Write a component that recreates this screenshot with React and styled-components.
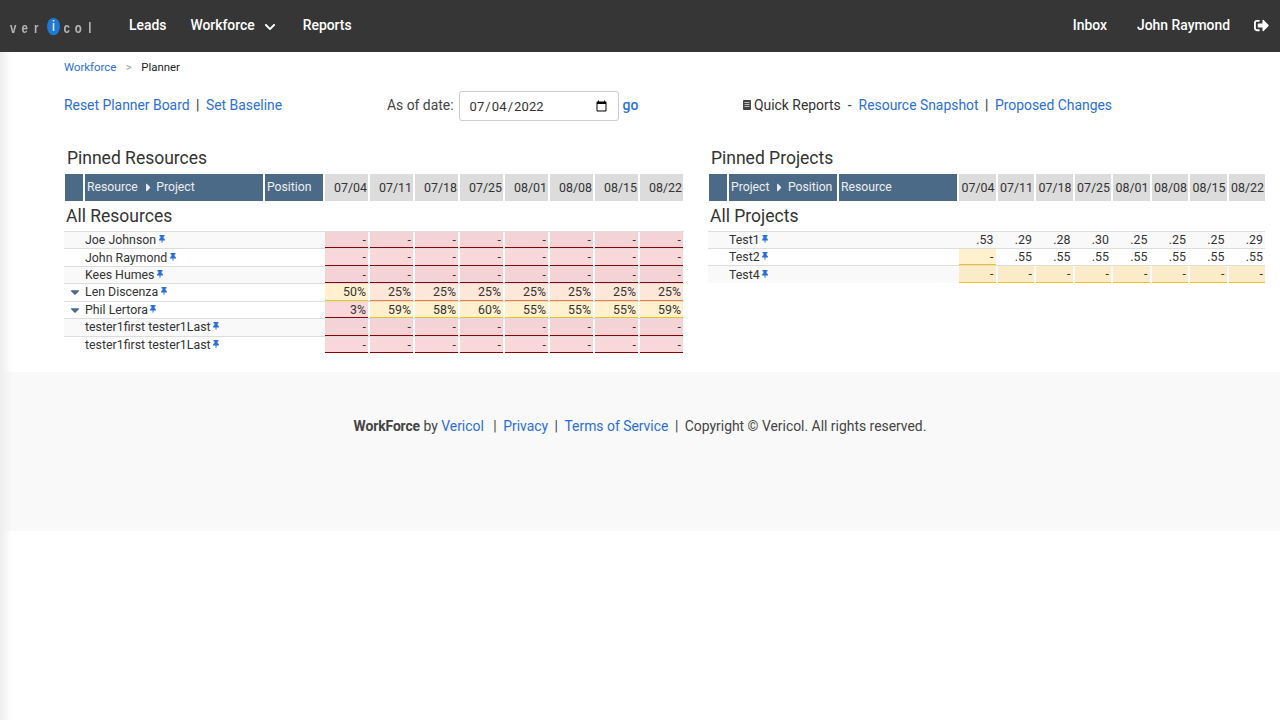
import React from 'react'
import styled, { createGlobalStyle } from 'styled-components'
import { FaSignOutAlt, FaChevronDown, FaThumbtack, FaCaretRight, FaCaretDown } from 'react-icons/fa'

const dates = ['07/04', '07/11', '07/18', '07/25', '08/01', '08/08', '08/15', '08/22']
const empty = ['-', '-', '-', '-', '-', '-', '-', '-']

const resources = [
    { name: 'Joe Johnson', cells: empty, tones: 'r', odd: true },
    { name: 'John Raymond', cells: empty, tones: 'r' },
    { name: 'Kees Humes', cells: empty, tones: 'r', odd: true },
    { name: 'Len Discenza', open: true, cells: ['50%', '25%', '25%', '25%', '25%', '25%', '25%', '25%'], tones: 'yooooooo' },
    { name: 'Phil Lertora', open: true, cells: ['3%', '59%', '58%', '60%', '55%', '55%', '55%', '59%'], tones: 'ryyyyyyy' },
    { name: 'tester1first tester1Last', cells: empty, tones: 'r', odd: true },
    { name: 'tester1first tester1Last', cells: empty, tones: 'r' },
]

const projects = [
    { name: 'Test1', cells: ['.53', '.29', '.28', '.30', '.25', '.25', '.25', '.29'], tones: 'n', odd: true },
    { name: 'Test2', cells: ['-', '.55', '.55', '.55', '.55', '.55', '.55', '.55'], tones: 'ynnnnnnn' },
    { name: 'Test4', cells: empty, tones: 'y', odd: true, height: 18 },
]

const tone = (tones, i) => (tones.length === 1 ? tones : tones[i])

const cellColors = {
    r: ['rgba(220, 60, 70, 0.2)', '#8b0000'],
    o: ['rgba(245, 120, 40, 0.18)', '#f57c2b'],
    y: ['rgba(255, 190, 30, 0.22)', '#f5bd20'],
    n: ['transparent', 'transparent'],
}

function Row({ row, nameWidth, height, cellWidth }) {
    return (
        <RowWrap $odd={row.odd} $height={row.height || height}>
            <NameCell $w={nameWidth}>
                <Toggle>{row.open && <FaCaretDown />}</Toggle>
                {row.name}
                <Pin><FaThumbtack /></Pin>
            </NameCell>
            <Cells>
                {row.cells.map((c, i) => (
                    <Cell key={i} $w={cellWidth} $tone={tone(row.tones, i)}>{c}</Cell>
                ))}
            </Cells>
        </RowWrap>
    )
}

export default function App() {
    return (
        <>
            <Global />
            <EdgeShade />
            <Nav>
                <Logo aria-label="vericol">
                    <span>v</span><span>e</span><span>r</span><Dot>i</Dot><span>c</span><span>o</span><span>l</span>
                </Logo>
                <NavLink>Leads</NavLink>
                <NavLink>Workforce<Chevron><FaChevronDown /></Chevron></NavLink>
                <NavLink>Reports</NavLink>
                <NavRight>
                    <NavLink>Inbox</NavLink>
                    <NavLink>John Raymond</NavLink>
                    <LogOut><FaSignOutAlt /></LogOut>
                </NavRight>
            </Nav>
            <Main>
                <Crumbs>
                    <a>Workforce</a><CrumbSep>&gt;</CrumbSep><span>Planner</span>
                </Crumbs>
                <Toolbar>
                    <ToolLeft><a>Reset Planner Board</a><Bar>|</Bar><a>Set Baseline</a></ToolLeft>
                    <ToolMid>
                        As of date:
                        <DateInput type="date" defaultValue="2022-07-04" />
                        <a>go</a>
                    </ToolMid>
                    <ToolRight>
                        <BookIcon viewBox="0 0 8 10">
                            <rect width="8" height="10" rx="1" fill="#444" />
                            <path d="M1.5 2.5h5M1.5 4.5h5M1.5 6.5h5" stroke="#ddd" strokeWidth="0.8" />
                        </BookIcon>
                        Quick Reports<Dash>-</Dash>
                        <a>Resource Snapshot</a><Bar>|</Bar><a>Proposed Changes</a>
                    </ToolRight>
                </Toolbar>
                <Boards>
                    <Board $w={620}>
                        <Title>Pinned Resources</Title>
                        <HeadRow>
                            <HeadBlue $w={18} />
                            <HeadBlue $w={178}>Resource<Arrow><FaCaretRight /></Arrow>Project</HeadBlue>
                            <HeadBlue $w={58}>Position</HeadBlue>
                            {dates.map(d => <HeadDate key={d} $w={43}>{d}</HeadDate>)}
                        </HeadRow>
                        <AllTitle>All Resources</AllTitle>
                        <Rows>
                            {resources.map((r, i) => (
                                <Row key={i} row={r} nameWidth={261} height={17.43} cellWidth={43} />
                            ))}
                        </Rows>
                    </Board>
                    <Board $w={557}>
                        <Title>Pinned Projects</Title>
                        <HeadRow>
                            <HeadBlue $w={18} />
                            <HeadBlue $w={108}>Project<Arrow><FaCaretRight /></Arrow>Position</HeadBlue>
                            <HeadBlue $w={118}>Resource</HeadBlue>
                            {dates.map(d => <HeadDate key={d} $w={36.5}>{d}</HeadDate>)}
                        </HeadRow>
                        <AllTitle>All Projects</AllTitle>
                        <Rows>
                            {projects.map((r, i) => (
                                <Row key={i} row={r} nameWidth={251} height={17} cellWidth={36.5} />
                            ))}
                        </Rows>
                    </Board>
                </Boards>
            </Main>
            <Footer>
                <strong>WorkForce</strong>&nbsp;by&nbsp;<a>Vericol</a>
                <FootBar $wide>|</FootBar><a>Privacy</a><FootBar>|</FootBar><a>Terms of Service</a><FootBar>|</FootBar>
                Copyright © Vericol. All rights reserved.
            </Footer>
        </>
    )
}

const Global = createGlobalStyle`
    html, body {
        margin: 0;
        background: #fff;
    }
    body {
        font-family: Roboto, "Liberation Sans", sans-serif;
        font-size: 13.9px;
        color: #333;
        min-height: 720px;
    }
    a {
        color: #2b6fd6;
        cursor: pointer;
    }
`

const EdgeShade = styled.div`
    position: absolute;
    left: 0;
    top: 52px;
    width: 12px;
    height: 668px;
    background: linear-gradient(to right, #eee, rgba(255, 255, 255, 0));
    pointer-events: none;
`

const Nav = styled.div`
    height: 52px;
    background: #363636;
    display: flex;
    align-items: center;
    color: #fff;
    padding: 0 11px 2px 0;
    box-sizing: border-box;
`

const Logo = styled.div`
    width: 129px;
    flex: none;
    padding-left: 7.5px;
    box-sizing: border-box;
    display: flex;
    align-items: center;
    font-family: "Liberation Sans", sans-serif;
    font-size: 11.5px;
    font-weight: 700;
    color: #b5b5b5;
    filter: blur(0.5px);
    transform: translateY(1px) scaleY(1.35);

    > span {
        flex: none;
        width: 11.5px;
        text-align: center;
    }
`

const Dot = styled.span`
    && {
        width: 13px;
    }
    height: 13px;
    margin: 0 1px 0 5px;
    border-radius: 50%;
    background: #1f78d1;
    color: #cfe3f7;
    font-size: 11px;
    line-height: 13px;
`

const NavLink = styled.div`
    font-size: 13.9px;
    font-weight: 500;
    margin-right: 24px;
    display: flex;
    align-items: center;
    white-space: nowrap;
`

const Chevron = styled.span`
    display: flex;
    margin: 4px 3px 0 9px;
    font-size: 12px;
`

const NavRight = styled.div`
    margin-left: auto;
    display: flex;
    align-items: center;

    ${NavLink} {
        margin-right: 30px;
    }
    ${NavLink}:nth-child(2) {
        margin-right: 24px;
    }
`

const LogOut = styled.span`
    display: flex;
    font-size: 15px;
`

const Main = styled.div`
    padding: 0 64px;
    height: 320px;
    box-sizing: border-box;
`

const Crumbs = styled.div`
    height: 30px;
    display: flex;
    align-items: center;
    font-size: 11.4px;
    color: #222;
`

const CrumbSep = styled.span`
    color: #999;
    margin: 0 9.5px;
`

const Toolbar = styled.div`
    display: flex;
    align-items: center;
    height: 30px;
    margin-top: 8px;
`

const ToolLeft = styled.div`
    width: 323px;
    white-space: nowrap;
`

const Bar = styled.span`
    margin: 0 6.5px;
    color: #333;
`

const ToolMid = styled.div`
    width: 356px;
    display: flex;
    align-items: center;
    white-space: nowrap;
    color: #444;

    a {
        margin-left: 4px;
        font-weight: 500;
    }
`

const DateInput = styled.input`
    width: 160px;
    height: 30px;
    box-sizing: border-box;
    margin: 2px 0 0 5px;
    border: 1px solid #ccc;
    border-radius: 3px;
    padding: 0 8px 0 9px;
    font-family: Roboto, sans-serif;
    font-size: 13px;
    letter-spacing: 0.1px;
    color: #333;
    background: #fff;
`

const ToolRight = styled.div`
    display: flex;
    align-items: center;
    white-space: nowrap;
`

const BookIcon = styled.svg`
    width: 8px;
    height: 10px;
    margin-right: 3px;
`

const Dash = styled.span`
    margin: 0 7px;
`

const Boards = styled.div`
    display: flex;
    margin-top: 26px;
`

const Board = styled.div`
    width: ${p => p.$w}px;
    flex: none;
    margin-right: 24px;
`

const Title = styled.div`
    font-size: 17.5px;
    line-height: 24px;
    padding: 0 0 4px 3px;
    color: #333;
`

const AllTitle = styled.div`
    font-size: 17.5px;
    line-height: 24px;
    margin: 3px 0 3px;
    padding-left: 2px;
`

const HeadRow = styled.div`
    display: flex;
    gap: 2px;
    margin-left: 1px;
    height: 27px;
`

const HeadBlue = styled.div`
    width: ${p => p.$w}px;
    flex: none;
    background: #4a6a87;
    color: #eee;
    font-size: 12.2px;
    display: flex;
    align-items: center;
    padding: 0 0 1px 2px;
    box-sizing: border-box;
    white-space: nowrap;
`

const Arrow = styled.span`
    display: flex;
    margin: 0 1.5px 0 4px;
    font-size: 13px;
`

const HeadDate = styled.div`
    width: ${p => p.$w}px;
    flex: none;
    background: #dcdcdc;
    font-size: 12.4px;
    display: flex;
    align-items: center;
    justify-content: flex-end;
    padding: 0 1px 1px 0;
    box-sizing: border-box;
`

const Rows = styled.div`
    display: flex;
    flex-direction: column;
`

const RowWrap = styled.div`
    display: flex;
    height: ${p => p.$height}px;
    border-top: 1px solid #ddd;
    box-sizing: border-box;
    background: ${p => (p.$odd ? '#f9f9f9' : '#fff')};
`

const NameCell = styled.div`
    width: ${p => p.$w}px;
    flex: none;
    display: flex;
    align-items: center;
    font-size: 12.35px;
    color: #333;
    white-space: nowrap;
`

const Toggle = styled.span`
    width: 21px;
    flex: none;
    display: flex;
    justify-content: center;
    font-size: 14px;
    color: #4a6a87;
`

const Pin = styled.span`
    display: flex;
    margin: 0 0 2px 1.5px;
    font-size: 8px;
    color: #2b6fd6;
`

const Cells = styled.div`
    display: flex;
    gap: 2px;
`

const Cell = styled.div`
    width: ${p => p.$w}px;
    flex: none;
    box-sizing: border-box;
    background: ${p => cellColors[p.$tone][0]};
    border-bottom: 1px solid ${p => cellColors[p.$tone][1]};
    font-size: 12.35px;
    text-align: right;
    padding-right: 2px;
    line-height: 16px;
`

const Footer = styled.div`
    height: 159px;
    box-sizing: border-box;
    background: #f9f9f9;
    padding-top: 46px;
    display: flex;
    justify-content: center;
    align-items: flex-start;
    white-space: pre;
    color: #444;

    strong {
        font-weight: 700;
        letter-spacing: -0.1px;
    }
`

const FootBar = styled.span`
    margin: 0 6.5px 0 ${p => (p.$wide ? 9.5 : 6.5)}px;
`
